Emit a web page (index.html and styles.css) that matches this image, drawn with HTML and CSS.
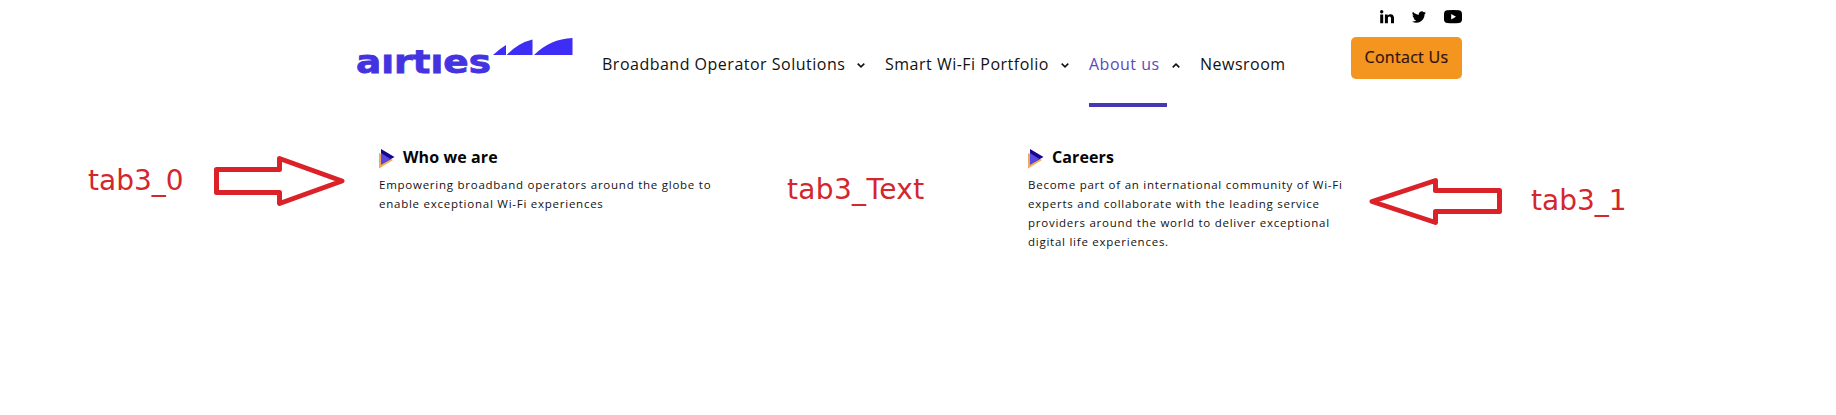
FILE: index.html
```html
<!DOCTYPE html>
<html lang="en">
<head>
<meta charset="utf-8">
<title>Airties</title>
<link rel="stylesheet" href="styles.css">
</head>
<body>
<header class="header">
  <a class="logo" aria-label="Airties">
    <svg width="224" height="50" viewBox="-2 0 224 50">
      <text class="wordmark" x="0" y="38" textLength="135" lengthAdjust="spacingAndGlyphs">aırtıes</text>
      <path class="waves" d="M137 20Q144 13.500 150 10V20ZM150.700 20Q162 8 176.500 4.500V20ZM178 20Q194 4 216.500 3V20Z"/>
    </svg>
  </a>
  <nav class="nav">
    <a class="item solutions">Broadband Operator Solutions<svg class="chevron" width="8" height="5" viewBox="0 0 8 5"><path d="M.7 .7L4 3.800L7.300 .7"/></svg></a>
    <a class="item portfolio">Smart Wi-Fi Portfolio<svg class="chevron" width="8" height="5" viewBox="0 0 8 5"><path d="M.7 .7L4 3.800L7.300 .7"/></svg></a>
    <a class="item about">About us<svg class="chevron" width="8" height="5" viewBox="0 0 8 5"><path d="M.7 4.300L4 1.200L7.300 4.300"/></svg></a>
    <a class="item">Newsroom</a>
  </nav>
  <div class="actions">
    <div class="social">
      <svg width="14" height="14" viewBox="0 0 14 14"><circle cx="1.700" cy="1.700" r="1.700"/><path d="M.2 4.500H3.200V13.200H.2ZM4.900 4.500H7.700V5.700C8.300 4.700 9.300 4.200 10.500 4.200C13.200 4.200 14 6 14 8.300V13.200H11V8.900C11 7.800 10.900 6.600 9.500 6.600C8.100 6.600 7.900 7.700 7.900 8.800V13.200H4.900Z"/></svg>
      <svg width="14" height="14" viewBox="0 0 24 24"><path d="M23.950 4.570a10 10 0 0 1-2.820.77 4.960 4.960 0 0 0 2.160-2.720c-.95.550-2 .96-3.130 1.180a4.920 4.920 0 0 0-8.380 4.480C7.690 8.100 4.070 6.130 1.640 3.160a4.900 4.900 0 0 0 1.520 6.570 4.900 4.900 0 0 1-2.230-.61v.06a4.920 4.920 0 0 0 3.950 4.830 5 5 0 0 1-2.210.08 4.940 4.940 0 0 0 4.600 3.420A9.870 9.870 0 0 1 0 19.540a14 14 0 0 0 7.550 2.210c9.050 0 14-7.500 14-13.980 0-.21 0-.42-.02-.63a9.940 9.940 0 0 0 2.420-2.570z"/></svg>
      <svg width="18" height="14" viewBox="0 0 18 14"><path fill-rule="evenodd" d="M3 .3Q9 -.1 15 .3Q17.600 .4 17.900 3Q18.200 7 17.900 10.500Q17.600 12.900 15 13.100Q9 13.500 3 13.100Q.4 12.900 .1 10.500Q-.2 7 .1 3Q.4 .4 3 .3ZM7.200 4V9.500L12 6.750Z"/></svg>
    </div>
    <a class="contact">Contact Us</a>
  </div>
</header>
<main class="panel">
  <section class="card">
    <h2 class="title"><svg width="16" height="20" viewBox="0 0 16 20"><path fill="#efa95e" d="M0 4L14 11L0 19.500Z"/><path fill="#16058a" d="M2 0L15.500 8L2 15.500Z"/><path fill="#5748df" d="M2 4L11.500 10L2 15.500Z"/></svg><span>Who we are</span></h2>
    <p class="copy">Empowering broadband operators around the globe to<br>enable exceptional Wi-Fi experiences</p>
  </section>
  <section class="card">
    <h2 class="title"><svg width="16" height="20" viewBox="0 0 16 20"><path fill="#efa95e" d="M0 4L14 11L0 19.500Z"/><path fill="#16058a" d="M2 0L15.500 8L2 15.500Z"/><path fill="#5748df" d="M2 4L11.500 10L2 15.500Z"/></svg><span>Careers</span></h2>
    <p class="copy">Become part of an international community of Wi-Fi<br>experts and collaborate with the leading service<br>providers around the world to deliver exceptional<br>digital life experiences.</p>
  </section>
</main>
<span class="note note-left">tab3_0</span>
<svg class="arrow arrow-left" width="136" height="56" viewBox="0 0 136 56"><path d="M6.500 16.500H69.500V5.500L132 28L69.500 50.500V39.500H6.500Z"/></svg>
<span class="note note-center">tab3_Text</span>
<svg class="arrow arrow-right" width="140" height="56" viewBox="0 0 140 56"><path d="M136.500 17.500H72.500V7.500L9 28.500L72.500 49.500V38.500H136.500Z"/></svg>
<span class="note note-right">tab3_1</span>
</body>
</html>
```
FILE: styles.css
```css
* { box-sizing: border-box; }
body {
  margin: 0;
  height: 415px;
  position: relative;
  overflow: hidden;
  background: #fff;
  color: #111;
  font-family: "Open Sans", "Noto Sans", sans-serif;
}
.header {
  display: flex;
  height: 110px;
  padding-left: 354px;
}
.logo { width: 248px; padding-top: 35px; }
.logo svg { display: block; overflow: visible; }
.wordmark {
  font: bold 32px "DejaVu Sans", sans-serif;
  fill: #4433e0;
  stroke: #4433e0;
  stroke-width: .8;
}
.waves { fill: #3d2df5; }
.nav {
  display: flex;
  width: 749px;
  padding-top: 52px;
  font-size: 16px;
  line-height: 24px;
  letter-spacing: .5px;
  white-space: nowrap;
}
.item { display: flex; height: 55px; }
.solutions { width: 283px; }
.portfolio { width: 204px; }
.about {
  width: 78px;
  margin-right: 33px;
  color: #5b4bb8;
  border-bottom: 4px solid #4637b3;
}
.chevron {
  flex: none;
  margin: 11px 0 0 12px;
  fill: none;
  stroke: #111;
  stroke-width: 1.6;
}
.actions { width: 111px; padding-top: 10px; }
.social {
  display: flex;
  justify-content: flex-end;
  gap: 18px;
  height: 27px;
}
.contact {
  display: block;
  height: 42px;
  border-radius: 5px;
  background: #f3951f;
  color: #301111;
  font-size: 16px;
  font-weight: 500;
  line-height: 41px;
  letter-spacing: .3px;
  text-align: center;
  -webkit-text-stroke: .2px #301111;
}
.panel {
  display: grid;
  grid-template-columns: 649px 400px;
  padding: 37px 0 0 379px;
}
.title {
  display: flex;
  gap: 8px;
  margin: 0;
  height: 28px;
  color: #050505;
  font-size: 16px;
  font-weight: 700;
  line-height: 20px;
  letter-spacing: .1px;
}
.title svg { margin-top: 2px; }
.copy {
  margin: 0;
  font-size: 11.5px;
  line-height: 19px;
  letter-spacing: .75px;
  white-space: nowrap;
}
.note {
  position: absolute;
  color: #d3262d;
  font-family: "DejaVu Sans", sans-serif;
  font-size: 28px;
  line-height: 32px;
}
.note-left { left: 88px; top: 165px; }
.note-center { left: 787px; top: 174px; letter-spacing: .35px; }
.note-right { left: 1531px; top: 185px; }
.arrow {
  position: absolute;
  fill: none;
  stroke: #dc2229;
  stroke-width: 5;
  stroke-linejoin: round;
}
.arrow-left { left: 210px; top: 153px; }
.arrow-right { left: 1363px; top: 173px; }
```
